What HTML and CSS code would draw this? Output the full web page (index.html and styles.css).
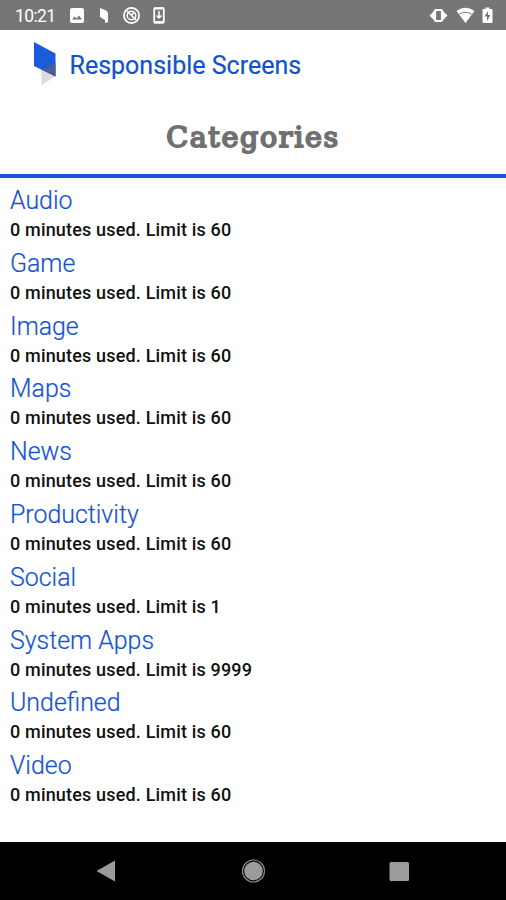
FILE: index.html
```html
<!DOCTYPE html>
<html lang="en">
<head>
<meta charset="utf-8">
<title>Responsible Screens</title>
<link rel="stylesheet" href="styles.css">
</head>
<body>
<div class="status">
  <span class="time">10:21</span>
  <svg class="left-icons" width="98" height="30" viewBox="0 0 98 30">
    <path fill="#fff" fill-rule="evenodd" d="M2 8h10a2 2 0 0 1 2 2v11a2 2 0 0 1-2 2H2a2 2 0 0 1-2-2V10a2 2 0 0 1 2-2zM2 19.500h10l-3-4-2.500 3-2-2z"/>
    <path fill="#fff" d="M30 8l5 2q3 1 3 4v8l-3 1v-3l-5-3z"/>
    <g fill="none" stroke="#fff"><circle cx="61.500" cy="15.500" r="7.600" stroke-width="1.700"/><circle cx="61.500" cy="15.500" r="4.300" stroke-width="1.500"/><path stroke-width="1.700" d="M57 11l9 9M61 15l3-2"/></g>
    <rect x="84.200" y="8.200" width="9.600" height="14.600" rx="1" fill="none" stroke="#fff" stroke-width="1.800"/><path stroke="#fff" stroke-width="2" d="M84 8.500h10M84 22h10"/><path fill="none" stroke="#fff" stroke-width="1.500" d="M89 11v7M86.500 15.500l2.500 2.500 2.500-2.500"/>
  </svg>
  <svg class="right-icons" width="66" height="30" viewBox="0 0 66 30">
    <path fill="#fff" d="M1.500 15.500l4.500-4.500v9zM19.500 15.500l-4.500-4.500v9z"/><rect x="7" y="10" width="7" height="11" rx="1" fill="none" stroke="#fff" stroke-width="2.200"/>
    <path fill="#fff" d="M28.500 11Q37.500 4.500 46.500 11L37.500 23z"/><path fill="none" stroke="#767676" stroke-width="1" d="M31.500 14.200q6-4 12 0"/>
    <path fill="#fff" fill-rule="evenodd" d="M57.500 7.500h4v1.500h2q1 0 1 1v12q0 1-1 1h-8q-1 0-1-1V10q0-1 1-1h2zM60 11l-3.500 5.500h2.500v4.500l3.500-6h-2.500z"/>
  </svg>
</div>
<header class="brand">
  <svg width="24" height="46" viewBox="0 0 24 46">
    <path fill="#dadddc" d="M8.500 27L22.500 20V35L8.500 44.500z"/>
    <path fill="#1b5bdc" d="M1 1l21.500 11.500V35.500L1 25z"/>
    <path fill="#4a5d94" d="M8.500 28.500L22.500 22V35.500z"/>
  </svg>
  <span class="brand-name">Responsible Screens</span>
</header>
<div class="heading"><h1>Categories</h1></div>
<main class="list">
  <section><h2>Audio</h2><p>0 minutes used. Limit is 60</p></section>
  <section><h2>Game</h2><p>0 minutes used. Limit is 60</p></section>
  <section><h2>Image</h2><p>0 minutes used. Limit is 60</p></section>
  <section><h2>Maps</h2><p>0 minutes used. Limit is 60</p></section>
  <section><h2>News</h2><p>0 minutes used. Limit is 60</p></section>
  <section><h2>Productivity</h2><p>0 minutes used. Limit is 60</p></section>
  <section><h2>Social</h2><p>0 minutes used. Limit is 1</p></section>
  <section><h2>System Apps</h2><p>0 minutes used. Limit is 9999</p></section>
  <section><h2>Undefined</h2><p>0 minutes used. Limit is 60</p></section>
  <section><h2>Video</h2><p>0 minutes used. Limit is 60</p></section>
</main>
<nav class="nav">
  <svg width="506" height="58" viewBox="0 0 506 58">
    <g fill="#9b9b9b"><path d="M96.500 29L115 18.500V39.500z"/><circle cx="253.500" cy="29" r="9.300"/><rect x="389.500" y="20" width="19.500" height="19" rx="1.500"/></g>
    <circle cx="253.500" cy="29" r="11" fill="none" stroke="#8a8a8a" stroke-width="1.200"/>
  </svg>
</nav>
</body>
</html>
```
FILE: styles.css
```css
* { box-sizing: border-box; }
body {
  margin: 0;
  height: 900px;
  display: flex;
  flex-direction: column;
  overflow: hidden;
  background: #fff;
  font-family: Roboto, sans-serif;
}
.status {
  height: 30px;
  display: flex;
  align-items: center;
  padding: 0 12px 0 15px;
  background: #767676;
  color: #fff;
}
.time { width: 55px; font-size: 17.5px; letter-spacing: -0.6px; padding-top: 1px; }
.right-icons { margin-left: auto; }
.brand {
  height: 70px;
  display: flex;
  align-items: flex-start;
  padding: 11px 0 0 33px;
}
.brand-name {
  margin: 10px 0 0 12.5px;
  font-size: 25px;
  line-height: 30px;
  color: #1352cf;
  -webkit-text-stroke: 0.2px #1352cf;
  white-space: nowrap;
}
.heading {
  height: 78px;
  display: flex;
  justify-content: center;
  border-bottom: 4px solid #1455d2;
}
h1 {
  margin: 18px 0 0;
  font: 400 28.5px/40px "DejaVu Serif", serif;
  -webkit-text-stroke: 1.9px #707070;
  letter-spacing: 1.7px;
  color: #707070;
}
.list { flex: 1; padding: 6px 10px 0; }
section { height: 62.8px; }
h2 {
  margin: 0;
  font-size: 24.9px;
  font-weight: 300;
  line-height: 34px;
  color: #1352d6;
  -webkit-text-stroke: 0.2px #1352d6;
}
p {
  margin: 0;
  font-size: 18px;
  font-weight: 500;
  line-height: 23px;
  letter-spacing: 0.17px;
  color: #111;
}
.nav { height: 58px; background: #000; }
.nav svg { display: block; }
```
